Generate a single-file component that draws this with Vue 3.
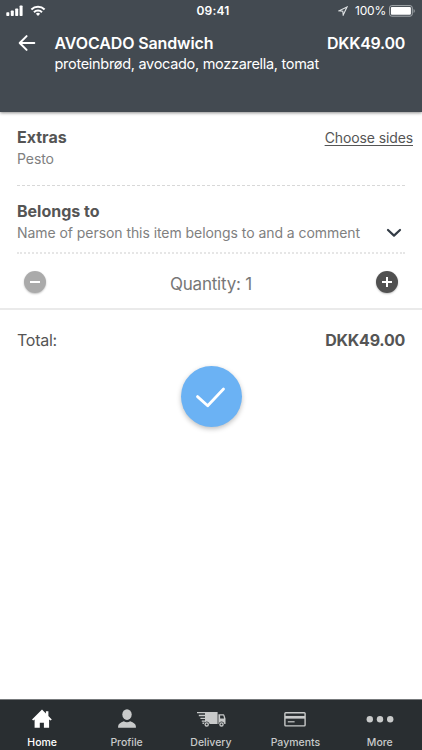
<script setup>
import { ref } from 'vue'

const quantity = ref(1)
const tabs = [
  { id: 'home', label: 'Home' },
  { id: 'profile', label: 'Profile' },
  { id: 'delivery', label: 'Delivery' },
  { id: 'payments', label: 'Payments' },
  { id: 'more', label: 'More' },
]
</script>

<template>
  <div class="screen">
    <header class="header">
      <div class="status">
        <div class="status-left">
          <svg width="40" height="12" viewBox="0 0 40 12" fill="#fff">
            <rect x="0.3" y="7.3" width="3" height="3.7" rx="0.7" />
            <rect x="4.8" y="5.6" width="3" height="5.4" rx="0.7" />
            <rect x="9.2" y="3.5" width="3" height="7.5" rx="0.7" />
            <rect x="13.6" y="0.6" width="3" height="10.4" rx="0.7" />
            <g fill="none" stroke="#fff" stroke-width="2">
              <path d="M25.4 4.5a9.3 9.3 0 0 1 13.2 0" />
              <path d="M28 7.3a5.6 5.6 0 0 1 8 0" />
            </g>
            <path d="M32 10.9l-2.1-2.2a3.1 3.1 0 0 1 4.2 0z" />
          </svg>
        </div>
        <span class="clock">09:41</span>
        <div class="status-right">
          <svg width="10" height="10" viewBox="0 0 10 10" fill="none" stroke="#dfe2e4" stroke-width="1.1">
            <path d="M9 1L1 4.8l3.8.4.4 3.8z" />
          </svg>
          <span class="percent">100%</span>
          <svg width="27" height="12" viewBox="0 0 27 12">
            <rect x="0.5" y="0.6" width="22.8" height="10.6" rx="2.3" fill="none" stroke="#a4a9ad" />
            <rect x="1.9" y="2" width="20" height="7.8" rx="1" fill="#fff" />
            <path d="M24.6 4v4c1.5-.6 1.5-3.4 0-4z" fill="#a4a9ad" />
          </svg>
        </div>
      </div>
      <div class="title-row">
        <svg class="back" width="18" height="18" viewBox="0 0 18 18" fill="none" stroke="#fff" stroke-width="2" stroke-linecap="round" stroke-linejoin="round">
          <path d="M16.3 9H2M8.6 2.1L1.7 9l6.9 6.9" />
        </svg>
        <div class="item">
          <div class="line"><h1 class="name">AVOCADO Sandwich</h1><span class="price">DKK49.00</span></div>
          <p class="description">proteinbrød, avocado, mozzarella, tomat</p>
        </div>
      </div>
    </header>

    <main class="content">
      <section class="block extras">
        <div class="line"><h2 class="extras-title">Extras</h2><a class="choose">Choose sides</a></div>
        <p class="pesto">Pesto</p>
      </section>
      <section class="block belongs">
        <h2 class="belongs-title">Belongs to</h2>
        <div class="line comment-line">
          <p class="comment">Name of person this item belongs to and a comment</p>
          <svg width="16" height="10" viewBox="0 0 16 10" fill="none" stroke="#333c46" stroke-width="2.2" stroke-linecap="round" stroke-linejoin="round">
            <path d="M2 2l6 5.6L14 2" />
          </svg>
        </div>
      </section>
      <section class="quantity">
        <button class="round minus" aria-label="Decrease">
          <svg width="22" height="22" viewBox="0 0 22 22" stroke="#fff" stroke-width="2"><path d="M6 11h10" /></svg>
        </button>
        <span class="quantity-text">Quantity: {{ quantity }}</span>
        <button class="round plus" aria-label="Increase" @click="quantity++">
          <svg width="22" height="22" viewBox="0 0 22 22" stroke="#fff" stroke-width="2"><path d="M6 11h10M11 6v10" /></svg>
        </button>
      </section>
      <section class="total">
        <span class="total-label">Total:</span><strong class="total-price">DKK49.00</strong>
      </section>
      <button class="confirm" aria-label="Confirm">
        <svg width="32" height="24" viewBox="0 0 32 24" fill="none" stroke="#fff" stroke-width="2.8" stroke-linecap="round" stroke-linejoin="round">
          <path d="M2.5 11.6l10.2 9.2L28.5 4" />
        </svg>
      </button>
    </main>

    <nav class="tabs">
      <div v-for="tab in tabs" :key="tab.id" class="tab" :class="{ active: tab.id === 'home' }">
        <svg v-if="tab.id === 'home'" width="22" height="22" viewBox="0 0 22 22" fill="currentColor">
          <path d="M11 1.4L1 11.4l1.2 1.2L3.6 11.4v8.3h5.2v-5h4.1v5h5.2v-8.3l1.5 1.2 1.2-1.2-3.4-3.5V3.2h-2.5v2.2z" />
        </svg>
        <svg v-else-if="tab.id === 'profile'" width="22" height="22" viewBox="0 0 22 22" fill="currentColor">
          <ellipse cx="11" cy="6.6" rx="4.7" ry="5.3" />
          <path d="M2.1 19.8v-1.2c0-2.5 2.3-4.1 5.7-5.3 1.9 1.2 4.5 1.2 6.4 0 3.4 1.2 5.7 2.8 5.7 5.3v1.2z" />
        </svg>
        <svg v-else-if="tab.id === 'delivery'" width="30" height="22" viewBox="0 0 30 22" fill="currentColor">
          <path d="M9 4h12.6v12H13.6c-.5-3.4-5.2-3.4-5.8 0H6.5v-1.6H9z" />
          <path d="M1 4.7h9M2.8 7.5h7M4.4 10.3h6M5.8 13.1h4" stroke="currentColor" stroke-width="1.3" />
          <path fill-rule="evenodd" d="M22.4 6.3h4.5c1 0 1.4.4 1.8 1.6l.8 2.7V16h-1.2c-.5-3.3-5-3.3-5.5 0h-.4zm1.7 1.3v3h4l-.8-3z" />
          <g fill="none" stroke="currentColor" stroke-width="1.3">
            <circle cx="10.7" cy="16.4" r="1.6" /><circle cx="25.5" cy="16.4" r="1.6" />
          </g>
        </svg>
        <svg v-else-if="tab.id === 'payments'" width="24" height="22" viewBox="0 0 24 22" fill="none" stroke="currentColor">
          <rect x="1.9" y="4.7" width="20.2" height="13.2" rx="0.8" stroke-width="1.4" />
          <path d="M2 9.3h20" stroke-width="2.7" />
          <path d="M4.8 13.8h6.8" stroke-width="1.2" />
        </svg>
        <svg v-else width="30" height="22" viewBox="0 0 30 22" fill="currentColor">
          <circle cx="4.8" cy="11.2" r="3.2" /><circle cx="15" cy="11.2" r="3.2" /><circle cx="25.2" cy="11.2" r="3.2" />
        </svg>
        <span class="tab-label">{{ tab.label }}</span>
      </div>
    </nav>
  </div>
</template>

<style>
body { margin: 0; background: #fff; }
</style>

<style scoped>
* { box-sizing: border-box; }
.screen { width: 422px; height: 750px; display: flex; flex-direction: column; overflow: hidden; background: #fff; font-family: Inter, sans-serif; color: #555; }
svg { display: block; flex: none; }
h1, h2, p { margin: 0; }
h1, h2, p, span, a, strong { white-space: nowrap; line-height: 20px; }
button { border: 0; padding: 0; }
.line { display: flex; justify-content: space-between; }
.header { height: 112px; flex: none; background: #434a51; color: #fff; box-shadow: 0 1px 3px rgba(0, 0, 0, .45); }
.status { height: 22px; display: grid; grid-template-columns: 1fr auto 1fr; align-items: center; padding: 0 6px; }
.status-right { display: flex; align-items: center; justify-content: flex-end; }
.clock { font-size: 12px; font-weight: 600; letter-spacing: .2px; padding-left: 4px; }
.percent { font-size: 12px; letter-spacing: -.2px; margin: 0 3px 0 7px; }
.title-row { display: flex; padding: 11px 17px 0 18px; }
.back { margin-top: 1px; }
.item { flex: 1; padding-left: 18.5px; }
.name { font-size: 16px; font-weight: 600; letter-spacing: -.12px; }
.price { font-size: 16px; font-weight: 600; letter-spacing: -.27px; }
.description { font-size: 14.5px; letter-spacing: -.3px; margin-top: 1px; }
.content { flex: 1; display: flex; flex-direction: column; }
.block { margin: 0 17px; }
.extras { height: 74px; padding-top: 15px; border-bottom: 1px dashed #d8d8d8; }
.extras-title, .belongs-title { font-size: 16px; font-weight: 700; }
.choose { font-size: 14px; letter-spacing: -.11px; margin-right: -8px; text-decoration: underline; text-underline-offset: 2px; padding-top: 1px; line-height: 20px; }
.pesto, .comment { font-size: 14px; color: #808080; letter-spacing: -.06px; }
.pesto { margin-top: 1px; }
.belongs { height: 68px; padding-top: 15px; border-bottom: 2px dotted #e6e6e6; }
.comment-line { margin-top: 2px; align-items: center; padding-right: 3px; }
.quantity { height: 56px; display: flex; align-items: center; justify-content: space-between; padding: 2px 24px 0; border-bottom: 2px solid #eaeaea; }
.quantity-text { font-size: 17px; letter-spacing: -.2px; color: #777; padding-top: 3px; }
.round { width: 22px; height: 22px; border-radius: 50%; box-shadow: 0 1px 2px rgba(0, 0, 0, .25); }
.minus { background: #aaa; }
.plus { background: #505050; }
.total { display: flex; justify-content: space-between; padding: 20px 17px 0; font-size: 16px; }
.total-label { letter-spacing: -.25px; }
.total-price { font-weight: 700; letter-spacing: -.25px; }
.confirm { width: 61px; height: 61px; margin-top: 16px; align-self: center; border-radius: 50%; background: #6bb2f4; display: flex; align-items: center; justify-content: center; box-shadow: 0 2px 5px rgba(0, 0, 0, .25); }
.tabs { height: 51px; flex: none; display: grid; grid-template-columns: repeat(5, 1fr); background: #292e31; border-top: 1px solid #777a7c; color: #c8caca; }
.tab { display: flex; flex-direction: column; align-items: center; padding-top: 8px; }
.tab-label { font-size: 10.5px; font-weight: 500; line-height: 14px; margin-top: 6px; }
.active { color: #fff; }
</style>
